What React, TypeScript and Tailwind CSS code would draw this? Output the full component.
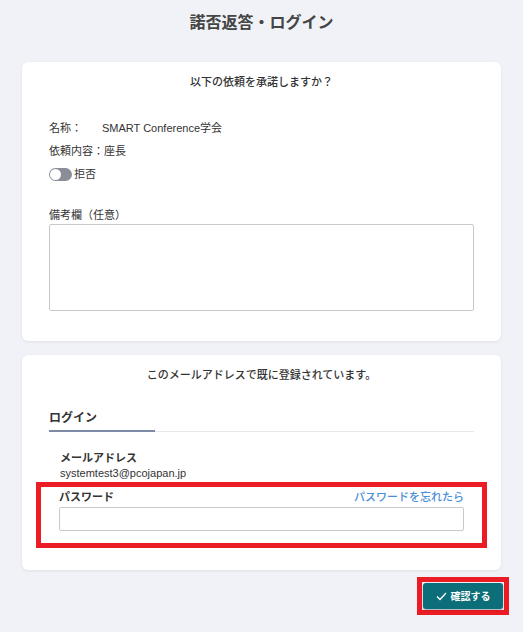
import { useState } from 'react';

const font = "font-['Liberation_Sans','Noto_Sans_CJK_JP',sans-serif]";

const App = () => {
  const [refuse, setRefuse] = useState(false);

  return (
    <div className={`${font} min-h-[632px] bg-[#f0f2f7] px-[22px] pb-4 text-[#333]`}>
      <h1 className="pt-[12px] text-center text-[16px] font-bold leading-[22px] text-[#444]">
        諾否返答・ログイン
      </h1>

      <div className="mt-[28px] rounded-md bg-white px-[27px] pb-[30px] pt-[13px] shadow-[0_1px_3px_rgba(0,0,0,0.08)]">
        <p className="text-center text-[11px] font-medium leading-[14px]">以下の依頼を承諾しますか？</p>

        <div className="mt-[32px] flex text-[11px] leading-[14px]">
          <span className="w-[53px]">名称：</span>
          <span>SMART Conference学会</span>
        </div>
        <p className="mt-[9px] text-[11px] leading-[14px]">依頼内容：座長</p>
        <label className="mt-[9px] flex items-center text-[11px] leading-[14px]">
          <button
            type="button"
            onClick={() => setRefuse(!refuse)}
            className={`relative h-[13px] w-[23px] rounded-full ${refuse ? 'bg-[#0b6e78]' : 'bg-[#8b8e98]'}`}
          >
            <span
              className={`absolute top-[1px] h-[11px] w-[11px] rounded-full bg-white ${refuse ? 'left-[11px]' : 'left-[1px]'}`}
            />
          </button>
          <span className="ml-[2px]">拒否</span>
        </label>

        <p className="mt-[27px] text-[11px] leading-[14px]">備考欄（任意）</p>
        <textarea className="mt-[2px] block h-[87px] w-full resize-none rounded-[2px] border border-[#c9c9c9] bg-white" />
      </div>

      <div className="mt-[14px] rounded-md bg-white px-[27px] pb-[22px] pt-[13px] shadow-[0_1px_3px_rgba(0,0,0,0.08)]">
        <p className="text-center text-[11px] font-medium leading-[14px]">このメールアドレスで既に登録されています。</p>

        <div className="mt-[28px] border-b border-[#e6e8ec]">
          <div className="mb-[-1px] w-[106px] border-b-2 border-[#7d8aa5] pb-[4px] text-[12px] font-bold leading-[16px]">
            ログイン
          </div>
        </div>

        <div className="mt-[19px] px-[11px] text-[11px] leading-[15px]">
          <p className="font-bold">メールアドレス</p>
          <p>systemtest3@pcojapan.jp</p>
        </div>

        <div className="-mx-[13px] mt-[1px] border-[5px] border-[#ec1c24] px-[18px] pb-[12px] pt-[3px]">
          <div className="flex items-center justify-between text-[11px] leading-[14px]">
            <span className="font-bold">パスワード</span>
            <a className="font-medium text-[#4a8fd6]">パスワードを忘れたら</a>
          </div>
          <input type="password" className="mt-[3px] block h-[24px] w-full rounded-[2px] border border-[#c9c9c9] bg-white" />
        </div>
      </div>

      <div className="mt-[7px] flex justify-end">
        <div className="-mr-[8px] border-[5px] border-[#ec1c24] p-[1px]">
          <button
            type="button"
            className="flex h-[26px] w-[80px] items-center justify-center gap-[4px] rounded-[3px] bg-[#0b6e78] text-[10px] font-bold text-white shadow-[0_1px_2px_rgba(0,0,0,0.3)]"
          >
            <svg width="11" height="9" viewBox="0 0 11 9" fill="none">
              <path d="M1 4.5 L4 7.5 L10 1" stroke="white" strokeWidth="1.3" />
            </svg>
            確認する
          </button>
        </div>
      </div>
    </div>
  );
};

export default App;
